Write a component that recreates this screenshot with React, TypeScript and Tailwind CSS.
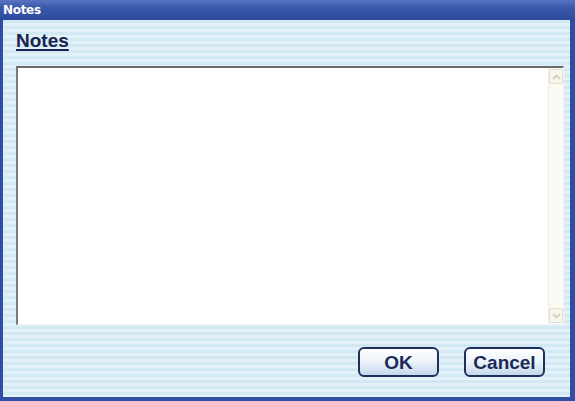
export default function App() {
  return (
    <div className="w-[575px] h-[401px] flex flex-col bg-[#2f4ea3] font-['Liberation_Sans',Arial,sans-serif]">
      {/* title bar */}
      <div className="h-[20px] flex items-center pl-[3px] bg-[linear-gradient(180deg,#5775c2_0%,#3a58ab_40%,#2d499b_100%)]">
        <span className="text-white text-[12px] font-bold font-['DejaVu_Sans',sans-serif] tracking-tight">Notes</span>
      </div>
      {/* body */}
      <div className="flex-1 flex flex-col ml-[3px] mr-[5px] mb-[4px] pl-[13px] pr-[1px] bg-[repeating-linear-gradient(180deg,#d2e9f3_0px,#d2e9f3_3px,#e3f2f8_3px,#e3f2f8_6px)]">
        <div className="h-[46px] pt-[10px]">
          <span className="text-[19px] leading-[22px] font-bold text-[#17244d] underline underline-offset-[2px] decoration-2">Notes</span>
        </div>
        <div className="w-[548px] h-[259px] flex bg-white border-t-2 border-l-2 border-t-[#6b6b6b] border-l-[#7a7a7a] border-r border-b border-r-[#eef3f5] border-b-[#eef3f5]">
          <textarea className="flex-1 resize-none outline-none bg-white" />
          <div className="w-[15px] flex flex-col justify-between bg-[#fbfaf4] border-l border-[#efece0] py-[1px]">
            <div className="h-[15px] flex items-center justify-center border border-[#e2dfd0] rounded-[2px] bg-[#f7f5ec]">
              <svg width="9" height="6" viewBox="0 0 9 6"><path d="M1 5 L4.5 1.5 L8 5" fill="none" stroke="#c9c6b6" strokeWidth="1.5" /></svg>
            </div>
            <div className="h-[15px] flex items-center justify-center border border-[#e2dfd0] rounded-[2px] bg-[#f7f5ec]">
              <svg width="9" height="6" viewBox="0 0 9 6"><path d="M1 1 L4.5 4.5 L8 1" fill="none" stroke="#c9c6b6" strokeWidth="1.5" /></svg>
            </div>
          </div>
        </div>
        <div className="flex justify-end gap-[25px] pt-[22px] pr-[24px]">
          <button className="w-[81px] h-[30px] rounded-[6px] border-2 border-[#1f2f5c] bg-[linear-gradient(180deg,#ffffff_0%,#eef4fa_45%,#c4d8ec_100%)] text-[19px] font-bold text-[#1b2a56] leading-none">OK</button>
          <button className="w-[81px] h-[30px] rounded-[6px] border-2 border-[#1f2f5c] bg-[linear-gradient(180deg,#ffffff_0%,#eef4fa_45%,#c4d8ec_100%)] text-[19px] font-bold text-[#1b2a56] leading-none">Cancel</button>
        </div>
      </div>
    </div>
  );
}
